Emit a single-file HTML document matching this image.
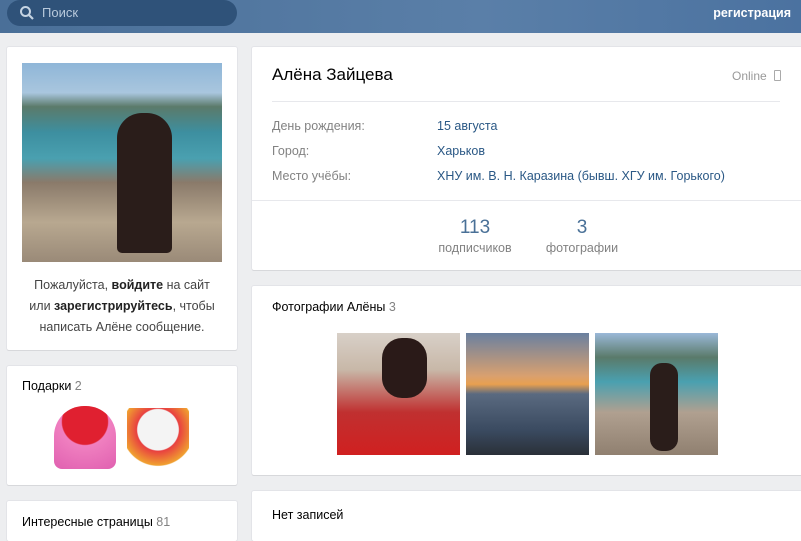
<!DOCTYPE html><html><head><meta charset="utf-8"><style>
body{margin:0;width:801px;height:531px;overflow:hidden;background:#edeef0;font-family:"Liberation Sans",sans-serif;font-size:12.5px;color:#000;position:relative}
.hd{position:absolute;left:0;top:0;width:801px;height:33px;background:linear-gradient(90deg,#4a6f98,#5a7fa8 60%,#4b72a0)}
.srch{position:absolute;left:7px;top:0;width:230px;height:26px;border-radius:13px;background:#2f5279;color:#b8c9dc;font-size:13px}
.reg{position:absolute;right:10px;top:6px;color:#fff;font-weight:bold;font-size:12.5px}
.card{position:absolute;background:#fff;box-shadow:0 1px 0 #d7d8db,0 0 0 1px #e3e4e8;border-radius:2px}
.g{color:#828282}.b{color:#2a5885}
</style></head><body>
<div class="hd"><div class="srch"><svg width="16" height="16" style="position:absolute;left:12px;top:5px"><circle cx="6.5" cy="6.5" r="4.5" fill="none" stroke="#c5d3e2" stroke-width="2"/><path d="M10 10l4 4" stroke="#c5d3e2" stroke-width="2.2"/></svg><span style="position:absolute;left:35px;top:5px">Поиск</span></div><div class="reg">регистрация</div></div>

<div class="card" style="left:7px;top:47px;width:230px;height:303px">
<div style="position:absolute;left:15px;top:16px;width:200px;height:199px;background:linear-gradient(180deg,#8fb6d8 0%,#a9c6de 15%,#5b7a6a 22%,#3d8fa0 35%,#4aa0b0 48%,#8a7a6a 60%,#b8a890 80%,#9a8a78 100%)">
<div style="position:absolute;left:95px;top:50px;width:55px;height:140px;background:#2a1d1a;border-radius:25px 25px 5px 5px"></div></div>
<div style="position:absolute;left:0;top:228px;width:230px;text-align:center;line-height:21px;color:#444">Пожалуйста, <b style="color:#222">войдите</b> на сайт<br>или <b style="color:#222">зарегистрируйтесь</b>, чтобы<br>написать Алёне сообщение.</div>
</div>

<div class="card" style="left:7px;top:366px;width:230px;height:119px">
<div style="position:absolute;left:15px;top:13px">Подарки <span class="g">2</span></div>
<div style="position:absolute;left:47px;top:40px;width:62px;height:63px;border-radius:30px 30px 8px 8px;background:radial-gradient(circle at 50% 25%,#e02030 40%,#f080c0 42%,#e060b0)"></div>
<div style="position:absolute;left:120px;top:42px;width:62px;height:62px;background:radial-gradient(circle at 50% 35%,#f4f4f4 40%,#e84040 42%,#f0a030 70%,#fff 72%)"></div>
</div>
<div class="card" style="left:7px;top:501px;width:230px;height:40px"><div style="position:absolute;left:15px;top:14px">Интересные страницы <span class="g">81</span></div></div>

<div class="card" style="left:252px;top:47px;width:560px;height:223px">
<div style="position:absolute;left:20px;top:18px;font-size:17px">Алёна Зайцева</div>
<div class="g" style="position:absolute;left:480px;top:22px;font-size:12px;color:#999">Online <span style="display:inline-block;width:5px;height:9px;border:1px solid #aaa;border-radius:1px;margin-left:4px;vertical-align:-1px"></span></div>
<div style="position:absolute;left:20px;top:54px;width:508px;height:1px;background:#e7e8ec"></div>
<div class="g" style="position:absolute;left:20px;top:67px;line-height:25px">День рождения:<br>Город:<br>Место учёбы:</div>
<div class="b" style="position:absolute;left:185px;top:67px;line-height:25px">15 августа<br>Харьков<br>ХНУ им. В. Н. Каразина (бывш. ХГУ им. Горького)</div>
<div style="position:absolute;left:0;top:153px;width:560px;height:1px;background:#e7e8ec"></div>
<div style="position:absolute;left:173px;top:170px;width:100px;text-align:center"><div style="font-size:19px;color:#2a5885;opacity:.85">113</div><div class="g" style="margin-top:2px">подписчиков</div></div>
<div style="position:absolute;left:280px;top:170px;width:100px;text-align:center"><div style="font-size:19px;color:#2a5885;opacity:.85">3</div><div class="g" style="margin-top:2px">фотографии</div></div>
</div>

<div class="card" style="left:252px;top:286px;width:560px;height:189px">
<div style="position:absolute;left:20px;top:14px">Фотографии Алёны <span class="g">3</span></div>
<div style="position:absolute;left:85px;top:47px;width:123px;height:122px;background:linear-gradient(180deg,#d8d0c8 0%,#c8b8a8 30%,#c03030 65%,#d02020 100%)"><div style="position:absolute;left:45px;top:5px;width:45px;height:60px;background:#2a1a18;border-radius:20px"></div></div>
<div style="position:absolute;left:214px;top:47px;width:123px;height:122px;background:linear-gradient(180deg,#6a80a0 0%,#d8a070 35%,#e8a050 42%,#5a6a80 50%,#3a4a60 80%,#2a3038 100%)"></div>
<div style="position:absolute;left:343px;top:47px;width:123px;height:122px;background:linear-gradient(180deg,#9ab8d8 0%,#5a7a6a 20%,#4aa0b0 40%,#b0a090 65%,#908070 100%)"><div style="position:absolute;left:55px;top:30px;width:28px;height:88px;background:#2a1d1a;border-radius:12px"></div></div>
</div>
<div class="card" style="left:252px;top:491px;width:560px;height:50px"><div style="position:absolute;left:20px;top:17px">Нет записей</div></div>
</body></html>
